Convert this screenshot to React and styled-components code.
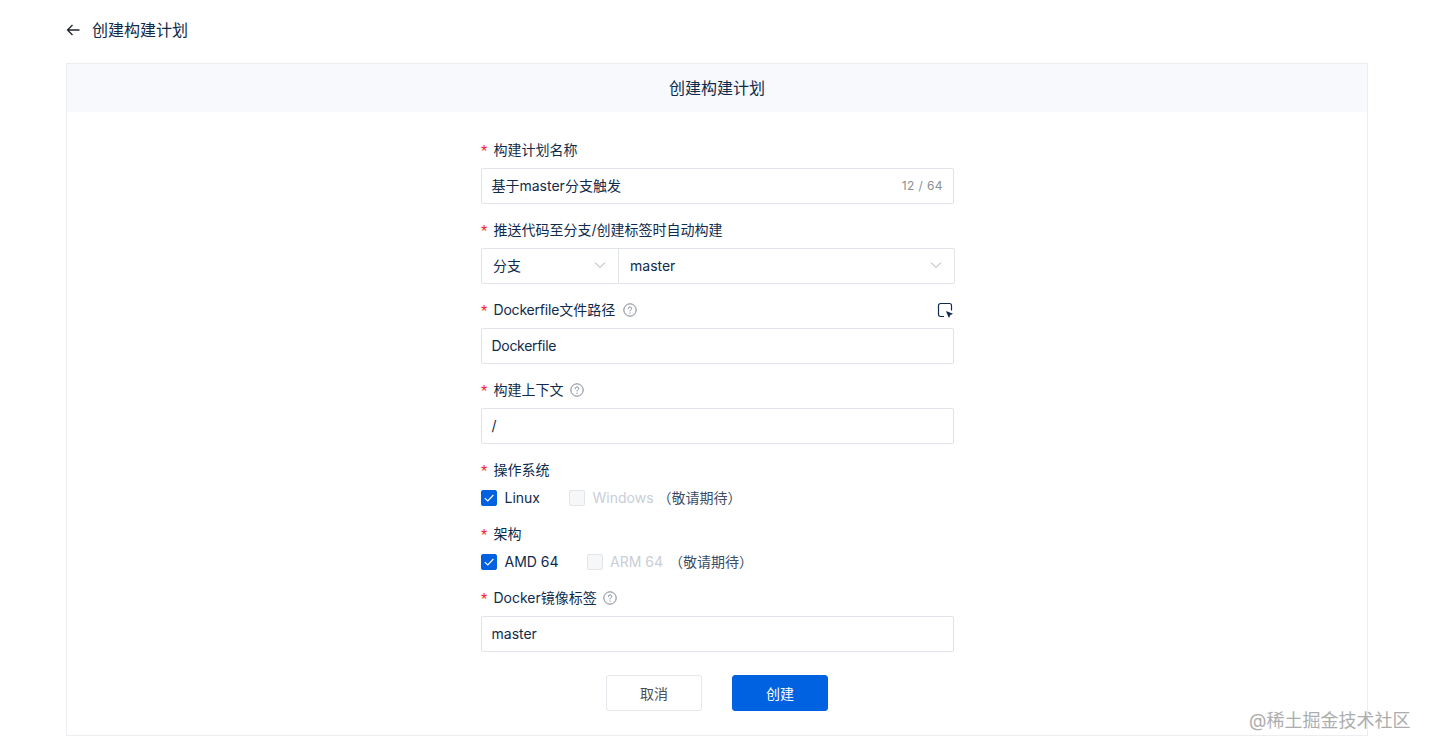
import React from "react";
import styled, { createGlobalStyle } from "styled-components";

const Global = createGlobalStyle`
  html, body { margin: 0; padding: 0; background: #fff; height: 100%; overflow: hidden; }
  body {
    font-family: "Inter", "Noto Sans CJK SC", sans-serif;
    font-size: 14px;
    color: #0f2b4c;
    -webkit-font-smoothing: antialiased;
  }
`;

const Page = styled.div`
  position: relative;
  box-sizing: border-box;
  height: 752px;
  padding: 0 63px 16px 66px;
  display: flex;
  flex-direction: column;
`;

const TopBar = styled.div`
  height: 63px;
  padding-bottom: 5px;
  box-sizing: border-box;
  display: flex;
  align-items: center;
  gap: 12px;
  font-size: 16px;
  color: #0f2b4c;
`;

const BackIcon = styled.svg`
  width: 14px;
  height: 14px;
  margin-top: 2px;
  display: block;
`;

const Card = styled.section`
  flex: 1;
  border: 1px solid #eceef2;
  display: flex;
  flex-direction: column;
  align-items: center;
`;

const CardHeader = styled.header`
  align-self: stretch;
  height: 48px;
  padding-bottom: 2px;
  box-sizing: border-box;
  background: #f7f9fc;
  display: flex;
  align-items: center;
  justify-content: center;
  font-size: 16px;
  color: #0f2b4c;
`;

const Form = styled.div`
  width: 473px;
  margin-top: 28px;
  margin-left: 1px;
  display: flex;
  flex-direction: column;
`;

const Item = styled.div`
  margin-bottom: 16px;
`;

const LabelRow = styled.div`
  height: 20px;
  margin-bottom: 8px;
  display: flex;
  align-items: center;
  font-size: 14px;
  line-height: 20px;
  color: #0f2b4c;
`;

const Star = styled.span`
  width: 12.5px;
  flex: none;
  color: #ec2127;
  font-family: "Liberation Sans", sans-serif;
  font-size: 16px;
  position: relative;
  top: 2px;
`;

const Tight = styled.span`
  letter-spacing: ${(p) => p.$spacing}px;
`;

const Help = styled.svg`
  width: 14px;
  height: 14px;
  margin-left: ${(p) => p.$gap}px;
  display: block;
`;

const EndIcon = styled.svg`
  width: 16px;
  height: 16px;
  margin-left: auto;
  margin-right: 1px;
  display: block;
`;

const Field = styled.div`
  box-sizing: border-box;
  height: 36px;
  border: 1px solid #e0e4ea;
  border-radius: 2px;
  padding: 0 10px 2px 9.5px;
  display: flex;
  align-items: center;
  justify-content: space-between;
  font-size: 14px;
  color: #0f2b4c;
  background: #fff;
`;

const Counter = styled.span`
  font-size: 12px;
  letter-spacing: 0.4px;
  color: #8a8f98;
`;

const SelectGroup = styled.div`
  display: flex;
  width: 474px;
  height: 36px;
  box-sizing: border-box;
  border: 1px solid #e0e4ea;
  border-radius: 2px;
`;

const SelectCell = styled.div`
  box-sizing: border-box;
  width: ${(p) => p.$width};
  flex: ${(p) => (p.$grow ? 1 : "none")};
  padding: 0 12px 2px 11px;
  display: flex;
  align-items: center;
  justify-content: space-between;
  border-left: ${(p) => (p.$divider ? "1px solid #e0e4ea" : "none")};
`;

const Chevron = styled.svg`
  width: 12px;
  height: 12px;
  display: block;
`;

const Checks = styled.div`
  height: 20px;
  display: flex;
  align-items: center;
`;

const Box = styled.span`
  box-sizing: border-box;
  width: 16px;
  height: 16px;
  border-radius: 2px;
  display: flex;
  align-items: center;
  justify-content: center;
  background: ${(p) => (p.$checked ? "#0062e0" : "#f6f7f9")};
  border: 1px solid ${(p) => (p.$checked ? "#0062e0" : "#e2e5ea")};
`;

const CheckText = styled.span`
  margin-left: 7.5px;
  margin-right: ${(p) => p.$gap}px;
  padding-bottom: 2px;
  color: ${(p) => (p.$disabled ? "#c9ced8" : "#0f2b4c")};
`;

const Soon = styled.span`
  padding-bottom: 2px;
  color: #3c4d66;
`;

const Actions = styled.div`
  display: flex;
  justify-content: center;
  gap: 30px;
  margin: 7px 0 0 -1px;
`;

const Button = styled.button`
  box-sizing: border-box;
  width: 96px;
  height: 36px;
  padding: 0 0 1px;
  border-radius: 3px;
  font: inherit;
  font-size: 14px;
  border: 1px solid ${(p) => (p.$primary ? "#0062e0" : "#e4e7ec")};
  background: ${(p) => (p.$primary ? "#0062e0" : "#fff")};
  color: ${(p) => (p.$primary ? "#fff" : "#4a4f57")};
`;

const Watermark = styled.div`
  position: absolute;
  left: 1249px;
  top: 709px;
  font-size: 18px;
  line-height: 24px;
  color: #adadad;
  white-space: nowrap;
`;

const HelpIcon = ({ gap = 7 }) => (
  <Help $gap={gap} viewBox="0 0 14 14" fill="none" stroke="#7c8594" strokeWidth="1">
    <circle cx="7" cy="7" r="6.2" />
    <path d="M5.3 5.6c0-1 .7-1.6 1.7-1.6s1.7.6 1.7 1.5c0 1.2-1.7 1.2-1.7 2.5" strokeLinecap="round" />
    <circle cx="7" cy="10.1" r=".7" fill="#7c8594" stroke="none" />
  </Help>
);

const Down = () => (
  <Chevron viewBox="0 0 12 12" fill="none" stroke="#a5acb8" strokeWidth="1">
    <path d="M1 3.5 6 8.5 11 3.5" />
  </Chevron>
);

const Tick = () => (
  <svg width="12" height="12" viewBox="0 0 12 12" fill="none" stroke="#fff" strokeWidth="1.1">
    <path d="M1.8 6.2 4.8 9 10.4 3" />
  </svg>
);

const Label = ({ children, help, helpGap, end }) => (
  <LabelRow>
    <Star>*</Star>
    {children}
    {help && <HelpIcon gap={helpGap} />}
    {end}
  </LabelRow>
);

export default function App() {
  return (
    <>
      <Global />
      <Page>
        <TopBar>
          <BackIcon viewBox="0 0 14 14" fill="none" stroke="#1f2329" strokeWidth="1.3">
            <path d="M13.5 7H1.5M6.5 2 1.5 7l5 5" />
          </BackIcon>
          创建构建计划
        </TopBar>
        <Card>
          <CardHeader>创建构建计划</CardHeader>
          <Form>
            <Item>
              <Label>构建计划名称</Label>
              <Field>
                基于master分支触发
                <Counter>12 / 64</Counter>
              </Field>
            </Item>
            <Item>
              <Label>推送代码至分支/创建标签时自动构建</Label>
              <SelectGroup>
                <SelectCell $width="136px">
                  分支
                  <Down />
                </SelectCell>
                <SelectCell $grow $divider>
                  master
                  <Down />
                </SelectCell>
              </SelectGroup>
            </Item>
            <Item>
              <Label
                help
                helpGap={8}
                end={
                  <EndIcon viewBox="0 0 16 16" fill="none" stroke="#0f2b4c" strokeWidth="1.2">
                    <path d="M7 14.5H3.5a2 2 0 0 1-2-2v-9a2 2 0 0 1 2-2h9a2 2 0 0 1 2 2v5" />
                    <path d="M10 10 14.6 11.8 12.8 12.6 12 14.6Z" fill="#0f2b4c" />
                  </EndIcon>
                }
              >
                <Tight $spacing={-0.2}>Dockerfile</Tight>文件路径
              </Label>
              <Field>
                <Tight $spacing={-0.3}>Dockerfile</Tight>
              </Field>
            </Item>
            <Item>
              <Label help helpGap={6}>构建上下文</Label>
              <Field>/</Field>
            </Item>
            <Item>
              <Label>操作系统</Label>
              <Checks>
                <Box $checked>
                  <Tick />
                </Box>
                <CheckText $gap={29}>Linux</CheckText>
                <Box />
                <CheckText $disabled $gap={4}>
                  Windows
                </CheckText>
                <Soon>（敬请期待）</Soon>
              </Checks>
            </Item>
            <Item>
              <Label>架构</Label>
              <Checks>
                <Box $checked>
                  <Tick />
                </Box>
                <CheckText $gap={28}>AMD 64</CheckText>
                <Box />
                <CheckText $disabled $gap={6}>
                  ARM 64
                </CheckText>
                <Soon>（敬请期待）</Soon>
              </Checks>
            </Item>
            <Item>
              <Label help helpGap={6}>Docker镜像标签</Label>
              <Field>master</Field>
            </Item>
            <Actions>
              <Button>取消</Button>
              <Button $primary>创建</Button>
            </Actions>
          </Form>
        </Card>
        <Watermark>@稀土掘金技术社区</Watermark>
      </Page>
    </>
  );
}
